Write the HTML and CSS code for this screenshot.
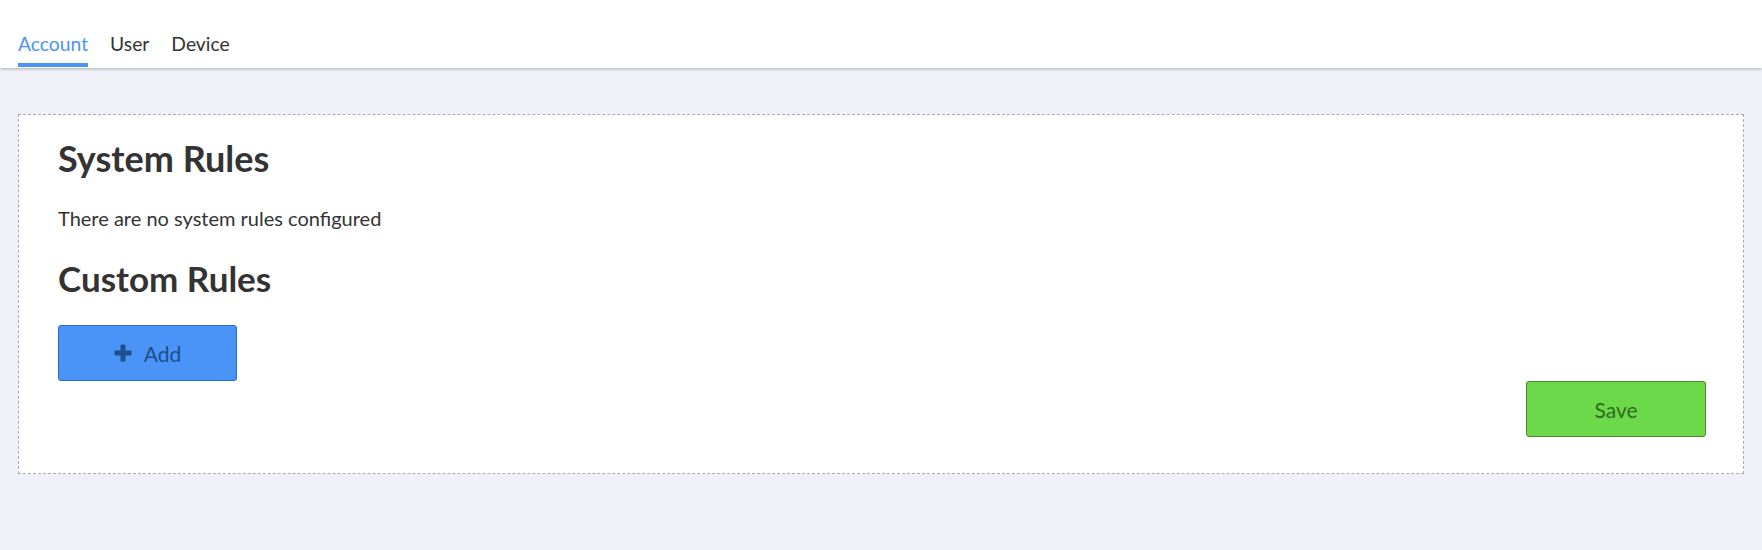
FILE: index.html
```html
<!DOCTYPE html>
<html>
<head>
<meta charset="utf-8">
<link rel="stylesheet" href="styles.css">
</head>
<body>
<header class="topbar">
  <nav class="tabs">
    <a class="tab active">Account</a>
    <a class="tab">User</a>
    <a class="tab">Device</a>
  </nav>
</header>
<main class="card">
  <h1 class="heading">System Rules</h1>
  <p class="note">There are no system rules configured</p>
  <h1 class="heading heading-custom">Custom Rules</h1>
  <div class="actions">
    <button class="btn btn-add"><svg class="plus" viewBox="0 0 18 18" width="18" height="18"><path d="M6.5 1.5a1 1 0 0 1 1-1h3a1 1 0 0 1 1 1v5h5a1 1 0 0 1 1 1v3a1 1 0 0 1-1 1h-5v5a1 1 0 0 1-1 1h-3a1 1 0 0 1-1-1v-5h-5a1 1 0 0 1-1-1v-3a1 1 0 0 1 1-1h5z" fill="currentColor"/></svg><span>Add</span></button>
  </div>
  <div class="footer">
    <button class="btn btn-save">Save</button>
  </div>
</main>
</body>
</html>
```
FILE: styles.css
```css
html, body {
  margin: 0;
  padding: 0;
}
body {
  background: #f0f0f9;
  font-family: "Lato", "Liberation Sans", sans-serif;
  color: #333333;
  height: 550px;
}
.topbar {
  background: #ffffff;
  height: 68px;
  box-shadow: 0 1px 3px rgba(0, 0, 0, 0.28);
  position: relative;
}
.tabs {
  display: flex;
  gap: 22px;
  padding: 0 18px;
  height: 68px;
  align-items: flex-end;
}
.tab {
  font-size: 19.3px;
  line-height: 26px;
  color: #333;
  padding-bottom: 6px;
  border-bottom: 4px solid transparent;
  margin-bottom: 1px;
  cursor: pointer;
}
.tab.active {
  color: #4a94f8;
  border-bottom-color: #4a94f8;
}
.card {
  margin: 46px 18px 0 18px;
  background: #ffffff;
  border: 1px dashed #aaaaaa;
  height: 358px;
  padding: 0 37px 0 39px;
  box-sizing: content-box;
  display: flex;
  flex-direction: column;
}
.heading {
  font-size: 36px;
  font-weight: 700;
  line-height: 43px;
  margin: 22px 0 0 0;
  color: #333;
}
.heading-custom {
  font-size: 35px;
  margin-top: 27px;
}
.note {
  font-size: 20px;
  line-height: 23px;
  margin: 27px 0 0 0;
  color: #333;
}
.actions {
  margin-top: 25px;
  display: flex;
}
.footer {
  display: flex;
  justify-content: flex-end;
}
.btn {
  width: 180px;
  height: 56px;
  border-radius: 3px;
  font-family: inherit;
  font-size: 21px;
  display: flex;
  align-items: center;
  justify-content: center;
  gap: 12px;
  padding: 0;
  cursor: pointer;
}
.btn-add {
  width: 179px;
  background: #4a94f8;
  border: 1px solid #2a6cc9;
  color: #1f4e8c;
}
.btn-save {
  background: #6cd94b;
  border: 1px solid #4b8c2f;
  color: #2f6b1f;
}
.plus {
  display: block;
}
```
